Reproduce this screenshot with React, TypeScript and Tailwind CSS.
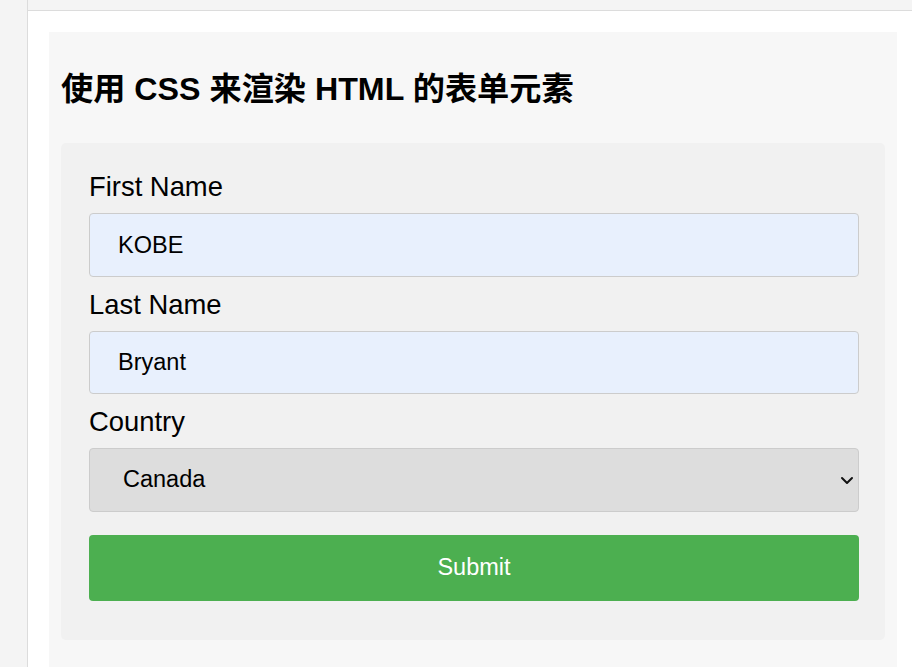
import React from "react";

export default function App() {
  return (
    <div className="flex h-[667px] w-full overflow-hidden bg-[#f4f4f4] font-['Liberation_Sans','Noto_Sans_CJK_SC',sans-serif] text-black">
      {/* left rail */}
      <div className="w-[28px] shrink-0 border-r border-[#dcdcdc]" />

      <div className="flex flex-1 flex-col">
        {/* top strip */}
        <div className="h-[11px] shrink-0 border-b border-[#dcdcdc]" />

        <div className="flex-1 bg-white pl-[21px] pr-[15px] pt-[21px]">
          <div className="h-full bg-[#f7f7f7] px-[12px] pt-[39px]">
            <h2 className="text-[32.2px] font-bold leading-[37px]">
              使用 CSS 来渲染 HTML 的表单元素
            </h2>

            <form
              className="mt-[35px] rounded-[5px] bg-[#f1f1f1] pl-[28px] pr-[26px] pb-[39px] pt-[28px]"
              onSubmit={(e) => e.preventDefault()}
            >
              <label className="mb-[11px] block text-[27.4px] leading-[31px]">First Name</label>
              <input
                type="text"
                defaultValue="KOBE"
                className="mb-[12px] block h-[64px] w-full rounded-[4px] border border-[#cccccc] bg-[#e8f0fd] pl-[28px] text-[23.5px] outline-none"
              />

              <label className="mb-[11px] block text-[27.4px] leading-[31px]">Last Name</label>
              <input
                type="text"
                defaultValue="Bryant"
                className="mb-[12px] block h-[63px] w-full rounded-[4px] border border-[#cccccc] bg-[#e8f0fd] pl-[28px] text-[23.5px] outline-none"
              />

              <label className="mb-[11px] block text-[27.4px] leading-[31px]">Country</label>
              <div className="relative mb-[23px]">
                <select
                  defaultValue="canada"
                  className="block h-[64px] w-full appearance-none rounded-[4px] border border-[#cccccc] bg-[#dddddd] pl-[33px] pr-[30px] text-[23.5px] outline-none"
                >
                  <option value="australia">Australia</option>
                  <option value="canada">Canada</option>
                  <option value="usa">USA</option>
                </select>
                <svg
                  className="pointer-events-none absolute right-[5px] top-[28px]"
                  width="14"
                  height="9"
                  viewBox="0 0 14 9"
                  fill="none"
                >
                  <path d="M2 2l5 5 5-5" stroke="#111" strokeWidth="2" strokeLinecap="round" strokeLinejoin="round" />
                </svg>
              </div>

              <button
                type="submit"
                className="block h-[66px] w-full rounded-[4px] bg-[#4caf50] text-[23.5px] text-white"
              >
                Submit
              </button>
            </form>
          </div>
        </div>
      </div>
    </div>
  );
}
